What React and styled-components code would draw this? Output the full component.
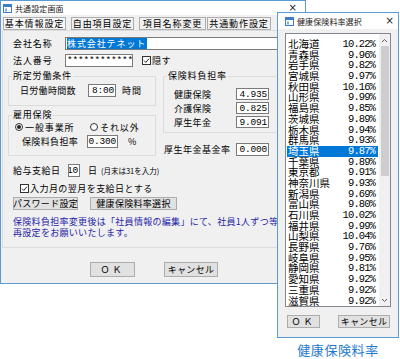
import React from 'react';
import styled, { createGlobalStyle } from 'styled-components';

const Global = createGlobalStyle`
  html, body { margin: 0; padding: 0; background: #fff; }
  body { font-family: "Noto Sans CJK JP", "Noto Sans", sans-serif; color: #000; }
`;

const Stage = styled.div`
  position: relative;
  width: 400px;
  height: 359px;
  overflow: hidden;
  background: #fff;
`;

/* ---------- main window ---------- */
const MainWindow = styled.div`
  box-sizing: border-box;
  width: 306px;
  height: 284px;
  border: 1px solid #5b9bd5;
  background: #f0f0f0;
  display: flex;
  flex-direction: column;
  overflow: hidden;
`;

const TitleBar = styled.div`
  flex: none;
  height: ${p => p.$h}px;
  background: #fff;
  display: flex;
  align-items: center;
  padding: 0 ${p => p.$pr}px 0 ${p => p.$pl}px;
`;

const TitleText = styled.span`
  margin-left: 3px;
  font-size: 8px;
  letter-spacing: 0.1px;
  color: #222;
  white-space: nowrap;
`;

const CloseX = styled.span`
  margin-left: auto;
  font-family: "DejaVu Sans", sans-serif;
  font-size: 10px;
  line-height: 10px;
  color: #222;
`;

const TabRow = styled.div`
  flex: none;
  display: flex;
  margin-top: 2px;
  padding-left: 2px;
`;

const Tab = styled.div`
  box-sizing: border-box;
  width: ${p => p.$w}px;
  margin-left: ${p => p.$ml || 0}px;
  height: 13px;
  border: 1px solid #adadad;
  background: ${p => (p.$active ? '#f7f7f7' : '#f0f0f0')};
  display: flex;
  align-items: center;
  justify-content: center;
  font-size: 9px;
  letter-spacing: 0.9px;
  white-space: nowrap;
`;

const Panel = styled.div`
  flex: none;
  box-sizing: border-box;
  height: 218px;
  margin: 0 0 0 1px;
  border: 1px solid #dcdcdc;
  padding: 6px 0 0 5px;
  display: flex;
  flex-direction: column;
`;

const Row = styled.div`
  display: flex;
  align-items: center;
  height: ${p => p.$h || 13}px;
  margin-top: ${p => p.$mt || 0}px;
  padding-left: ${p => p.$pl || 0}px;
  white-space: nowrap;
`;

const Label = styled.span`
  flex: none;
  width: ${p => (p.$w ? p.$w + 'px' : 'auto')};
  margin-left: ${p => p.$ml || 0}px;
  font-size: ${p => p.$fs || 9}px;
  letter-spacing: ${p => (p.$ls ?? 0.9)}px;
  white-space: nowrap;
`;

const Field = styled.div`
  box-sizing: border-box;
  flex: ${p => (p.$grow ? '1 0 auto' : 'none')};
  width: ${p => (p.$w ? p.$w + 'px' : 'auto')};
  height: ${p => p.$h || 13}px;
  border: 1px solid #7a7a7a;
  background: #fff;
  display: flex;
  align-items: center;
  justify-content: ${p => (p.$left ? 'flex-start' : 'flex-end')};
  padding: 0 1px;
  font-family: "Liberation Mono", monospace;
  font-size: 9.5px;
  letter-spacing: -0.2px;
  white-space: nowrap;
  overflow: hidden;
`;

const Selected = styled.span`
  background: #0078d7;
  color: #fff;
  font-family: "Noto Sans CJK JP", sans-serif;
  font-size: 9px;
  letter-spacing: 0.9px;
  line-height: 11px;
  padding-right: 1px;
`;

const Columns = styled.div`
  display: flex;
  margin-top: 9px;
  gap: 7px;
`;

const Col = styled.div`
  flex: none;
  width: ${p => p.$w}px;
  display: flex;
  flex-direction: column;
`;

const Group = styled.div`
  position: relative;
  box-sizing: border-box;
  height: ${p => p.$h}px;
  margin-top: ${p => p.$mt || 0}px;
  border: 1px solid #dcdcdc;
  padding: ${p => p.$pt}px 0 0 ${p => p.$pl}px;
  display: flex;
  flex-direction: column;
`;

const GroupTitle = styled.span`
  position: absolute;
  top: -7px;
  left: 3px;
  padding: 0 1px;
  background: #f0f0f0;
  font-size: 9px;
  line-height: 12px;
  letter-spacing: 0.8px;
  white-space: nowrap;
`;

const Radio = styled.span`
  box-sizing: border-box;
  width: 8px;
  height: 8px;
  border-radius: 50%;
  border: 1px solid #333;
  background: #fff;
  display: inline-flex;
  align-items: center;
  justify-content: center;
  margin-right: 2px;
  &::after {
    content: '';
    width: 4px;
    height: 4px;
    border-radius: 50%;
    background: ${p => (p.$on ? '#222' : 'transparent')};
  }
`;

const Choice = styled.span`
  display: inline-flex;
  align-items: center;
  width: ${p => (p.$w ? p.$w + 'px' : 'auto')};
  font-size: 9px;
  letter-spacing: 0.9px;
`;

const Small = styled.span`
  margin-left: 3px;
  font-size: 7.5px;
  letter-spacing: 0px;
`;

const Btn = styled.div`
  box-sizing: border-box;
  flex: none;
  width: ${p => p.$w}px;
  height: ${p => p.$h || 13}px;
  margin-left: ${p => p.$ml || 0}px;
  border: 1px solid #adadad;
  background: #e1e1e1;
  display: flex;
  align-items: center;
  justify-content: center;
  font-size: ${p => p.$fs || 9}px;
  letter-spacing: ${p => p.$ls ?? 0.5}px;
  white-space: nowrap;
`;

const Note = styled.div`
  margin-top: 6px;
  padding-left: 5px;
  font-size: 9px;
  line-height: 11px;
  letter-spacing: 0.3px;
  color: #2626a8;
  white-space: nowrap;
`;

const FooterRow = styled.div`
  display: flex;
  margin-top: 14px;
  padding-left: 89px;
`;

/* ---------- second window ---------- */
const Floating = styled.div`
  position: absolute;
  left: 277px;
  top: 12px;
  display: flex;
  flex-direction: column;
  align-items: center;
`;

const SubWindow = styled.div`
  box-sizing: border-box;
  width: 122px;
  height: 326px;
  border: 1px solid #5b9bd5;
  background: #f0f0f0;
  display: flex;
  flex-direction: column;
`;

const ListBox = styled.div`
  box-sizing: border-box;
  width: 106px;
  height: 274px;
  margin: 4px 0 0 7px;
  border: 1px solid #828790;
  background: #fff;
  display: flex;
  overflow: hidden;
`;

const List = styled.div`
  flex: 1;
  min-width: 0;
  padding: 5px 1px 0 1px;
  overflow: hidden;
`;

const Item = styled.div`
  display: flex;
  justify-content: space-between;
  align-items: center;
  height: 10.7px;
  padding: 0 3px 0 1px;
  white-space: nowrap;
  background: ${p => (p.$sel ? '#0078d7' : 'transparent')};
  color: ${p => (p.$sel ? '#fff' : '#000')};
`;

const Pref = styled.span`
  font-size: 10.5px;
  line-height: 10.7px;
  letter-spacing: 0px;
  white-space: nowrap;
`;

const Rate = styled.span`
  font-family: "Liberation Mono", monospace;
  font-size: 10.5px;
  line-height: 10.7px;
  letter-spacing: -0.9px;
  white-space: nowrap;
`;

const ScrollBar = styled.div`
  flex: none;
  width: 11px;
  background: #f0f0f0;
  display: flex;
  flex-direction: column;
  align-items: center;
`;

const Arrow = styled.div`
  flex: none;
  height: ${p => p.$h}px;
  display: flex;
  align-items: center;
  justify-content: center;
`;

const Thumb = styled.div`
  width: 8px;
  height: 130px;
  background: #cdcdcd;
`;

const Spacer = styled.div`
  flex: 1;
`;

const SubButtons = styled.div`
  display: flex;
  margin-top: 8px;
  padding-left: 9px;
`;

const Caption = styled.div`
  margin-top: 5px;
  font-size: 13px;
  line-height: 14px;
  letter-spacing: 0.6px;
  color: #1f7acb;
  white-space: nowrap;
`;

/* ---------- drawings ---------- */
const WinIcon = () => (
  <svg width="9" height="9" viewBox="0 0 9 9">
    <rect x="0.5" y="0.5" width="8" height="8" fill="#fff" stroke="#3d7cc9" />
    <rect x="0.5" y="0.5" width="8" height="2.5" fill="#3d7cc9" />
    <rect x="2" y="4.5" width="2" height="3" fill="#7fb0e6" />
  </svg>
);

const CheckSvg = styled.svg`
  flex: none;
  margin-left: ${p => p.$ml || 0}px;
  margin-right: 1px;
`;

const Check = ({ ml = 0 }) => (
  <CheckSvg $ml={ml} width="9" height="9" viewBox="0 0 9 9">
    <rect x="0.5" y="0.5" width="8" height="8" fill="#fff" stroke="#333" />
    <path d="M2 4.6 L3.8 6.4 L7 2.6" fill="none" stroke="#222" strokeWidth="1" />
  </CheckSvg>
);

const Chevron = ({ up }) => (
  <svg width="7" height="5" viewBox="0 0 7 5">
    <path d={up ? 'M1 4 L3.5 1.5 L6 4' : 'M1 1 L3.5 3.5 L6 1'} fill="none" stroke="#606060" strokeWidth="1" />
  </svg>
);

const prefs = [
  ['北海道', '10.22%'], ['青森県', '9.96%'], ['岩手県', '9.82%'], ['宮城県', '9.97%'],
  ['秋田県', '10.16%'], ['山形県', '9.99%'], ['福島県', '9.85%'], ['茨城県', '9.89%'],
  ['栃木県', '9.94%'], ['群馬県', '9.93%'], ['埼玉県', '9.87%'], ['千葉県', '9.89%'],
  ['東京都', '9.91%'], ['神奈川県', '9.93%'], ['新潟県', '9.69%'], ['富山県', '9.80%'],
  ['石川県', '10.02%'], ['福井県', '9.99%'], ['山梨県', '10.04%'], ['長野県', '9.76%'],
  ['岐阜県', '9.95%'], ['静岡県', '9.81%'], ['愛知県', '9.92%'], ['三重県', '9.92%'],
  ['滋賀県', '9.92%'],
];

export default function App() {
  return (
    <Stage>
      <Global />
      <MainWindow>
        <TitleBar $h={14} $pl={2} $pr={8}>
          <WinIcon />
          <TitleText>共通設定画面</TitleText>
          <CloseX>×</CloseX>
        </TitleBar>
        <TabRow>
          <Tab $w={63} $active>基本情報設定</Tab>
          <Tab $w={63} $ml={5}>自由項目設定</Tab>
          <Tab $w={67} $ml={5}>項目名称変更</Tab>
          <Tab $w={64} $ml={1}>共通動作設定</Tab>
        </TabRow>
        <Panel>
          <Row $pl={5}>
            <Label $w={52}>会社名称</Label>
            <Field $grow $left>
              <Selected>株式会社テネット</Selected>
            </Field>
          </Row>
          <Row $pl={5} $mt={4}>
            <Label $w={52}>法人番号</Label>
            <Field $w={68} $left>************</Field>
            <Check ml={9} />
            <Label $ls={0.6}>隠す</Label>
          </Row>
          <Columns>
            <Col $w={148}>
              <Group $h={30} $pt={7} $pl={11}>
                <GroupTitle>所定労働条件</GroupTitle>
                <Row>
                  <Label $w={68} $ls={0.3}>日労働時間数</Label>
                  <Field $w={28}>8:00</Field>
                  <Label $ml={6}>時間</Label>
                </Row>
              </Group>
              <Group $h={41} $mt={9} $pt={5} $pl={6}>
                <GroupTitle>雇用保険</GroupTitle>
                <Row $h={12}>
                  <Choice $w={75}><Radio $on />一般事業所</Choice>
                  <Choice><Radio />それ以外</Choice>
                </Row>
                <Row $mt={2} $pl={7}>
                  <Label $w={65} $ls={0.35}>保険料負担率</Label>
                  <Field $w={31}>0.300</Field>
                  <Label $ml={10} $ls={0}>%</Label>
                </Row>
              </Group>
            </Col>
            <Col $w={140}>
              <Group $h={57} $pt={11} $pl={10}>
                <GroupTitle>保険料負担率</GroupTitle>
                <Row $h={12}>
                  <Label $w={62} $ls={0.3}>健康保険</Label>
                  <Field $w={33} $h={12}>4.935</Field>
                </Row>
                <Row $h={12} $mt={2}>
                  <Label $w={62} $ls={0.3}>介護保険</Label>
                  <Field $w={33} $h={12}>0.825</Field>
                </Row>
                <Row $h={12} $mt={2}>
                  <Label $w={62} $ls={0.3}>厚生年金</Label>
                  <Field $w={33} $h={12}>9.091</Field>
                </Row>
              </Group>
              <Row $mt={10} $pl={1}>
                <Label $w={72} $ls={0.5}>厚生年金基金率</Label>
                <Field $w={33}>0.000</Field>
              </Row>
            </Col>
          </Columns>
          <Row $mt={8} $pl={5}>
            <Label $w={55} $ls={0.5}>給与支給日</Label>
            <Field $w={12}>10</Field>
            <Label $ml={8}>日</Label>
            <Small>(月末は31を入力)</Small>
          </Row>
          <Row $mt={5} $h={12} $pl={12}>
            <Check />
            <Label $ls={0.45}>入力月の翌月を支給日とする</Label>
          </Row>
          <Row $mt={3} $pl={5}>
            <Btn $w={65} $ls={0.3}>パスワード設定</Btn>
            <Btn $w={87} $ml={12} $ls={0.3}>健康保険料率選択</Btn>
          </Row>
          <Note>
            保険料負担率変更後は「社員情報の編集」にて、社員1人ずつ等級ま
            <br />
            再設定をお願いいたします。
          </Note>
        </Panel>
        <FooterRow>
          <Btn $w={45} $h={15} $ls={3}>ＯＫ</Btn>
          <Btn $w={54} $h={15} $ml={29} $ls={0.3}>キャンセル</Btn>
        </FooterRow>
      </MainWindow>

      <Floating>
        <SubWindow>
          <TitleBar $h={16} $pl={7} $pr={4}>
            <WinIcon />
            <TitleText>健康保険料率選択</TitleText>
            <CloseX>×</CloseX>
          </TitleBar>
          <ListBox>
            <List>
              {prefs.map(([name, rate]) => (
                <Item key={name} $sel={name === '埼玉県'}>
                  <Pref>{name}</Pref>
                  <Rate>{rate}</Rate>
                </Item>
              ))}
            </List>
            <ScrollBar>
              <Arrow $h={12}><Chevron up /></Arrow>
              <Thumb />
              <Spacer />
              <Arrow $h={12}><Chevron /></Arrow>
            </ScrollBar>
          </ListBox>
          <SubButtons>
            <Btn $w={33} $ls={3}>ＯＫ</Btn>
            <Btn $w={52} $ml={18} $ls={0.3}>キャンセル</Btn>
          </SubButtons>
        </SubWindow>
        <Caption>健康保険料率</Caption>
      </Floating>
    </Stage>
  );
}
